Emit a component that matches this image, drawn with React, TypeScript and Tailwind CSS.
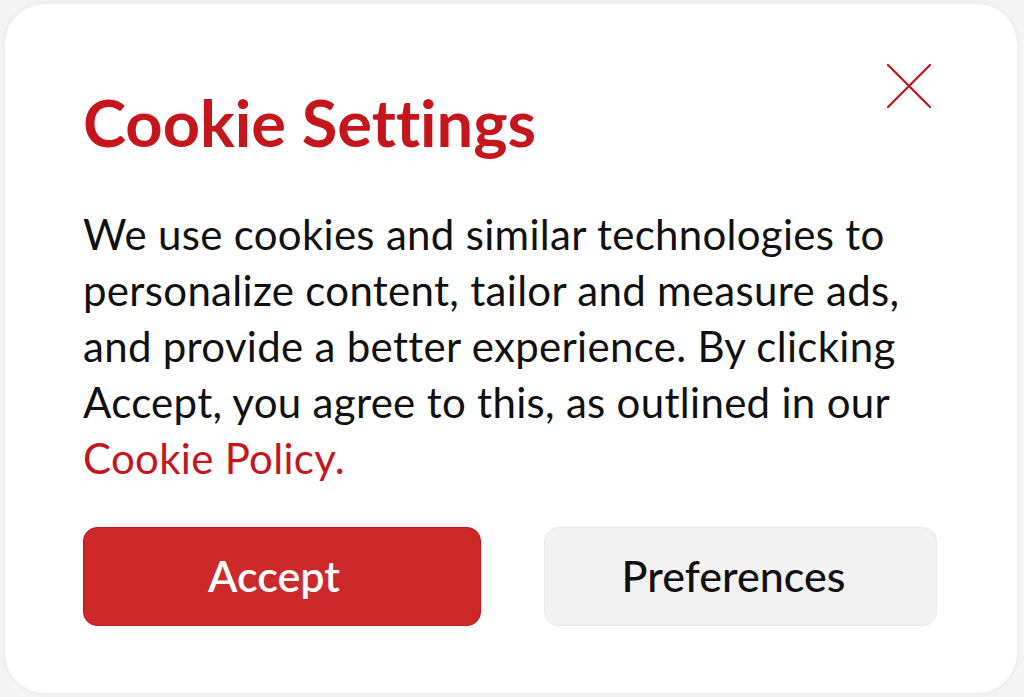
import React from "react";

export default function App() {
  return (
    <div className="w-[1024px] h-[697px] bg-[#f4f4f4] p-[4px_7px_4px_5px] overflow-hidden [font-variant-ligatures:none]" style={{ fontFamily: "Lato, 'Noto Sans', sans-serif" }}>
      <div className="relative h-[689px] w-[1012px] rounded-[40px] bg-white shadow-[0_0_6px_rgba(0,0,0,0.06)] pl-[78px] pr-[60px] pt-[80px]">
        <button className="absolute left-[878px] top-[56px] w-[52px] h-[52px] flex items-center justify-center">
          <svg width="44" height="44" viewBox="0 0 44 44" fill="none" stroke="#c0121a" strokeWidth="2.2" strokeLinecap="round">
            <path d="M1 1 L43 43 M43 1 L1 43" />
          </svg>
        </button>
        <h1 className="text-[65px] leading-[76px] font-bold text-[#c4161c]">Cookie Settings</h1>
        <p className="mt-[46px] text-[42px] leading-[56px] tracking-[0.3px] text-[#111111]">
          We use cookies and similar technologies to personalize content, tailor and measure ads, and provide a better experience. By clicking Accept, you agree to this, as outlined in our{" "}
          <a className="text-[#c4161c]">Cookie Policy.</a>
        </p>
        <div className="mt-[41px] flex gap-[63px]">
          <button className="w-[398px] h-[99px] pr-[16px] rounded-[14px] bg-[#cd292a] border border-[#c0161c] text-white text-[43px] font-semibold">Accept</button>
          <button className="w-[393px] h-[99px] pr-[14px] rounded-[14px] bg-[#f2f2f2] border border-[#ebebeb] text-[#111111] text-[43px] font-medium">Preferences</button>
        </div>
      </div>
    </div>
  );
}
